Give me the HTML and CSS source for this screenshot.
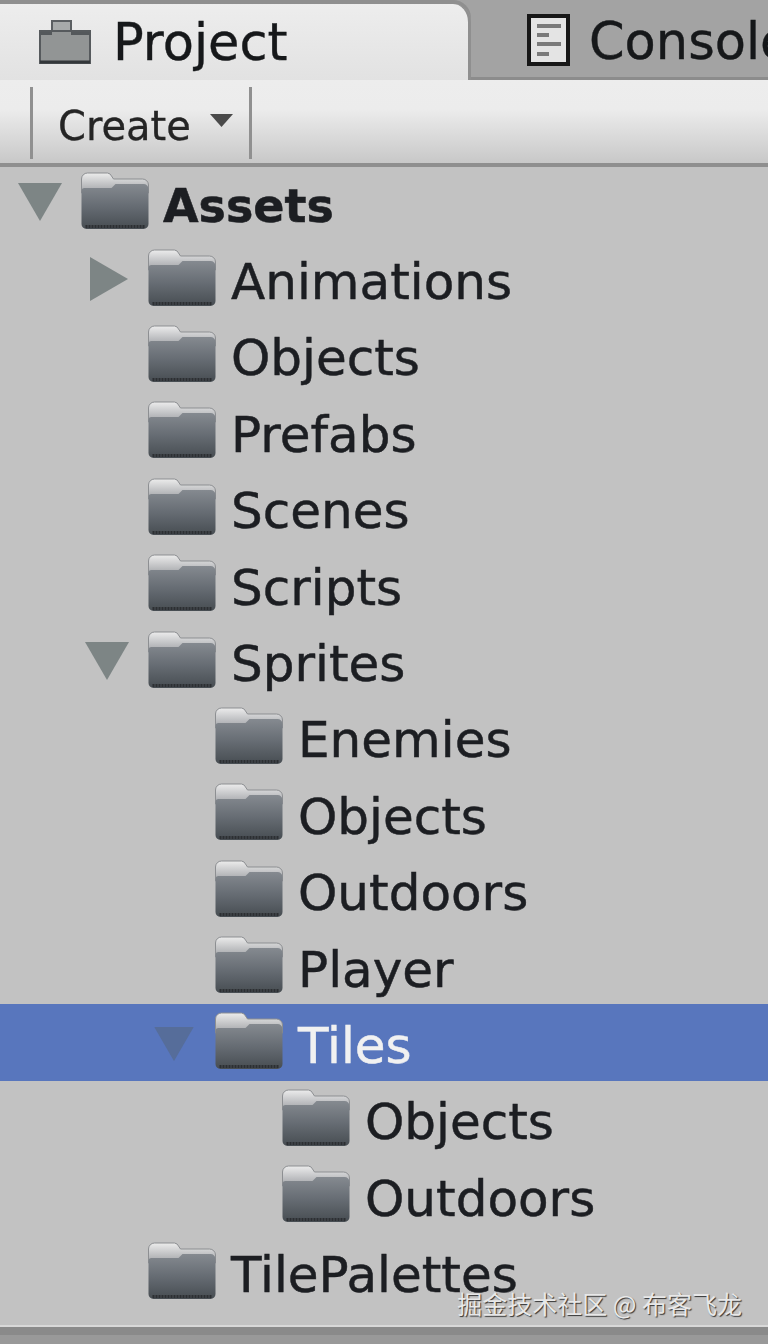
FILE: index.html
```html
<!DOCTYPE html>
<html lang="en">
<head>
<meta charset="utf-8">
<title>Project</title>
<link rel="stylesheet" href="styles.css">
</head>
<body>
<svg class="defs" width="0" height="0" aria-hidden="true">
  <defs>
    <linearGradient id="fbody" x1="0" y1="0" x2="0" y2="1">
      <stop offset="0" stop-color="#858a90"/>
      <stop offset=".5" stop-color="#666c73"/>
      <stop offset="1" stop-color="#474d52"/>
    </linearGradient>
    <linearGradient id="ftab" x1="0" y1="0" x2="0" y2="1">
      <stop offset="0" stop-color="#ececec"/>
      <stop offset="1" stop-color="#a0a2a6"/>
    </linearGradient>
    <symbol id="folder" viewBox="0 0 69 58">
      <path d="M1 16V7a6 6 0 0 1 6-6h20a5 5 0 0 1 4 3l2 3h29a6 6 0 0 1 6 6v8H1z" fill="url(#ftab)" stroke="#8d8f92" stroke-width="1"/>
      <path d="M1 19a3 3 0 0 1 3-3h27l4-4h28a5 5 0 0 1 5 5v35a5 5 0 0 1-5 5H6a5 5 0 0 1-5-5z" fill="url(#fbody)"/>
      <path d="M5 54.500h59" stroke="#2c2f32" stroke-width="3" fill="none" stroke-dasharray="2 1"/>
    </symbol>
  </defs>
</svg>
<main class="panel">
  <header class="tabs">
    <div class="tab tab-active">
      <svg class="tab-icon" viewBox="0 0 52 44"><rect x="13" y="1" width="19" height="12" fill="#a7aaaa" stroke="#5b5f62" stroke-width="2"/><rect x="1" y="11" width="50" height="32" fill="#929595" stroke="#565a5d" stroke-width="2"/><path d="M1 12h12v3H1zM32 12h19v3H32z" fill="#54585b"/><path d="M1 42h50" stroke="#33373a" stroke-width="3"/></svg>
      <span>Project</span>
    </div>
    <div class="tab tab-idle">
      <svg class="doc-icon" viewBox="0 0 43 52"><rect x="2" y="2" width="39" height="48" fill="#e4e4e4" stroke="#171717" stroke-width="4"/><path d="M10 12h24M10 21h12M10 30h24M10 40h12" stroke="#7a7a7a" stroke-width="4"/></svg>
      <span>Console</span>
    </div>
  </header>
  <div class="toolbar">
    <div class="create">
      <span>Create</span>
      <svg class="caret" viewBox="0 0 23 13"><path d="M0 0h23L11.500 13z" fill="#4a4a4a"/></svg>
    </div>
  </div>
  <div class="tree">
    <div class="row l0"><svg class="tri"><path d="M0 0h44L22 38z"/></svg><svg class="fld"><use href="#folder"/></svg><strong class="name">Assets</strong></div>
    <div class="row l1"><svg class="tri right"><path d="M0 0l38 22L0 44z"/></svg><svg class="fld"><use href="#folder"/></svg><span class="name">Animations</span></div>
    <div class="row l1"><svg class="fld"><use href="#folder"/></svg><span class="name">Objects</span></div>
    <div class="row l1"><svg class="fld"><use href="#folder"/></svg><span class="name">Prefabs</span></div>
    <div class="row l1"><svg class="fld"><use href="#folder"/></svg><span class="name">Scenes</span></div>
    <div class="row l1"><svg class="fld"><use href="#folder"/></svg><span class="name">Scripts</span></div>
    <div class="row l1"><svg class="tri"><path d="M0 0h44L22 38z"/></svg><svg class="fld"><use href="#folder"/></svg><span class="name">Sprites</span></div>
    <div class="row l2"><svg class="fld"><use href="#folder"/></svg><span class="name">Enemies</span></div>
    <div class="row l2"><svg class="fld"><use href="#folder"/></svg><span class="name">Objects</span></div>
    <div class="row l2"><svg class="fld"><use href="#folder"/></svg><span class="name">Outdoors</span></div>
    <div class="row l2"><svg class="fld"><use href="#folder"/></svg><span class="name">Player</span></div>
    <div class="row l2 selected"><svg class="tri"><path d="M0 0h44L22 38z"/></svg><svg class="fld"><use href="#folder"/></svg><span class="name">Tiles</span></div>
    <div class="row l3"><svg class="fld"><use href="#folder"/></svg><span class="name">Objects</span></div>
    <div class="row l3"><svg class="fld"><use href="#folder"/></svg><span class="name">Outdoors</span></div>
    <div class="row l1"><svg class="fld"><use href="#folder"/></svg><span class="name">TilePalettes</span></div>
  </div>
  <div class="watermark">掘金技术社区 @ 布客飞龙</div>
  <div class="footer"></div>
</main>
</body>
</html>
```
FILE: styles.css
```css
* { box-sizing: border-box; }
html, body { margin: 0; padding: 0; }
body { width: 768px; height: 1344px; overflow: hidden; background: #c2c2c2; font-family: "DejaVu Sans", "Noto Sans CJK SC", sans-serif; color: #1a1a1a; }
.defs { position: absolute; }
.panel { position: relative; width: 768px; height: 1344px; display: flex; flex-direction: column; overflow: hidden; }

.tabs { height: 80px; display: flex; background: #a3a3a3; border-bottom: 3px solid #8c8c8c; flex: none; }
.tab { display: flex; flex: none; align-items: center; font-size: 51px; white-space: nowrap; color: #16181a; }
.tab span { filter: blur(.6px); -webkit-text-stroke: .4px #16181a; }
.tab-active { width: 471px; height: 76px; margin-top: 4px; padding-left: 39px; gap: 22px; background: linear-gradient(#ededed, #e2e2e2); border-top-right-radius: 18px; border-right: 3px solid #8f8f8f; box-shadow: 0 -4px 0 #8f8f8f; }
.tab-icon { width: 52px; height: 44px; flex: none; }
.tab-idle { padding-left: 56px; gap: 19px; height: 82px; }
.doc-icon { width: 43px; height: 52px; flex: none; margin-top: -2px; }

.toolbar { position: relative; z-index: 1; height: 87px; flex: none; padding: 7px 0 4px 30px; background: linear-gradient(#ededed, #ececec 35%, #c8c8c8); border-bottom: 4px solid #8f8f8f; }
.create { width: 222px; height: 100%; display: flex; align-items: center; padding-left: 25px; gap: 19px; font-size: 40px; color: #242424; border-left: 3px solid #909090; border-right: 3px solid #909090; }
.create span { filter: blur(.6px); padding-top: 6px; -webkit-text-stroke: .3px #242424; }
.caret { width: 23px; height: 13px; flex: none; margin-top: -6px; }

.tree { margin-top: -3px; display: flex; flex-direction: column; flex: none; }
.row { position: relative; height: 76.4px; display: flex; align-items: center; flex: none; font-size: 50px; color: #1c1e22; }
.l0 { padding-left: 80px; }
.l1 { padding-left: 147px; }
.l2 { padding-left: 214px; }
.l3 { padding-left: 281px; }
.fld { width: 70px; height: 58px; flex: none; margin-right: 14px; margin-top: -2px; }
.name { filter: blur(.6px); white-space: nowrap; margin-top: 7px; -webkit-text-stroke: .5px currentColor; }
.l0 .fld { margin-right: 13px; }
.l0 .name { font-weight: 700; font-size: 46px; }
.tri { position: absolute; width: 44px; height: 38px; margin-left: -62px; fill: #7d8585; }
.tri.right { width: 38px; height: 44px; margin-left: -57px; }
.selected { background: #5876bd; color: #f1f1f1; }
.selected .tri { fill: #566d9a; transform: scale(.9); margin-top: 4px; margin-left: -62px; }

.watermark { position: absolute; right: 26px; bottom: 25px; font-size: 25px; line-height: 32px; color: #e8e8e8; text-shadow: 1px 1px 1px #333; font-family: "Noto Sans CJK SC", sans-serif; }
.footer { position: absolute; left: 0; right: 0; bottom: 0; height: 17px; background: #999; border-top: 8px solid #8a8a8a; box-shadow: 0 -2px 0 #d8d8d8; }
```
